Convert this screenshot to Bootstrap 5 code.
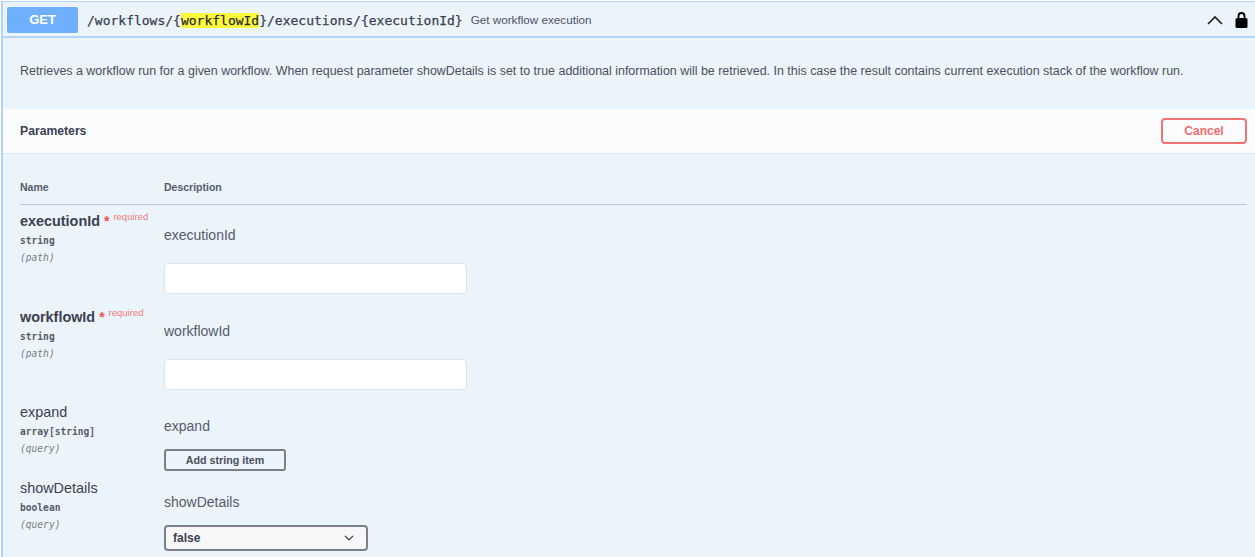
<!DOCTYPE html>
<html lang="en">
<head>
    <meta charset="UTF-8">
    <title>Get workflow execution</title>
    <meta name="viewport" content="width=device-width, initial-scale=1">
    <link href="https://cdn.jsdelivr.net/npm/bootstrap@5.3.3/dist/css/bootstrap.min.css" rel="stylesheet">
    <style>
        html, body { height: 557px; overflow: hidden; background: #fff; }
        body { font-family: "Liberation Sans", Arial, sans-serif; color: #3b4151; }
        .op-block { margin: 1px 0 0 1px; height: 560px; background: #ebf3fb; border: 1px solid #b4d3f8; border-left-width: 2px; border-right-width: 0; }
        .op-head { height: 36px; padding: 5px 7px 3px 4px; border-bottom: 2px solid #b4d3f8; }
        .method-tag { width: 71px; height: 26px; background: #6fb0fe; color: #fff; font-size: 13px; font-weight: 700; border-radius: 2px; }
        .op-path { margin-left: 9px; font: 13px "DejaVu Sans Mono", monospace; color: #3b4151; white-space: nowrap; -webkit-text-stroke: .25px #3b4151; }
        .op-path mark { padding: 0; background: #fdfb3c; color: #222; }
        .op-summary { margin-left: 8px; font-size: 11.7px; color: #4d5464; }
        .op-desc { height: 71px; padding: 24px 17px 0; font-size: 12.45px; color: #4a5160; white-space: nowrap; }
        .param-bar { height: 45px; padding: 0 8px 0 17px; background: #fafcfe; border-bottom: 1px solid #e0e6ee; }
        .param-bar b { font-size: 12.2px; }
        .cancel-btn { width: 86px; height: 26px; padding: 0; border: 2px solid #f47272; border-radius: 4px; background: transparent; color: #f46c6c; font-size: 12px; font-weight: 700; }
        .param-table { padding: 0 8px 0 17px; }
        .table-top { height: 51px; padding-bottom: 11px; border-bottom: 1px solid #bcc6d8; font-size: 10.5px; font-weight: 700; color: #565d6c; }
        .name-col { width: 144px; flex-shrink: 0; }
        .param-row { height: 95.5px; }
        .param-row.short-row { height: 76px; }
        .param-name { font-size: 14.4px; line-height: 16px; }
        .param-name.req { font-weight: 700; }
        .param-name sup { top: -6px; font-size: 9.5px; font-weight: 400; color: #f47a7a; }
        .req-star { font-size: 14px; color: #f0504f; }
        .param-type { margin-top: 6px; font: 700 9.6px/12px "DejaVu Sans Mono", monospace; color: #565d6c; }
        .param-in { margin-top: 5px; font: italic 9.6px/12px "DejaVu Sans Mono", monospace; color: #777e8a; }
        .label-col { padding-top: 14px; }
        .param-label { font-size: 14px; line-height: 16px; color: #565c6b; }
        .text-box { display: block; width: 303px; height: 31px; margin-top: 20px; border: 1px solid #dde3ea; border-radius: 4px; background: #fff; }
        .add-btn { width: 122px; height: 22px; margin-top: 15px; padding: 0; border: 2px solid #7b7f88; border-radius: 3px; background: transparent; color: #4a5160; font-size: 10.7px; font-weight: 700; }
        .bool-select { width: 204px; height: 26px; margin-top: 15px; padding: 0 7px; border: 2px solid #7b7f88; border-radius: 4px; background-color: #f7f7f7; background-position: right 12px center; background-size: 10px; font-size: 12px; font-weight: 700; color: #3b4151; }
    </style>
</head>
<body>
    <div class="op-block">
        <div class="op-head d-flex align-items-start">
            <span class="method-tag d-flex align-items-center justify-content-center">GET</span>
            <span class="op-path align-self-center">/workflows/{<mark>workflowId</mark>}/executions/{executionId}</span>
            <span class="op-summary align-self-center">Get workflow execution</span>
            <span class="ms-auto d-flex align-items-center gap-2 align-self-center">
                <svg width="16" height="10" viewBox="0 0 16 10"><path d="M1 9 L8 2 L15 9" fill="none" stroke="#222" stroke-width="1.7"/></svg>
                <svg class="ms-1" width="13" height="16" viewBox="0 0 13 16"><path d="M3.5 7 V4 a3 3 0 0 1 6 0 V7" fill="none" stroke="#000" stroke-width="1.8"/><rect x="0.5" y="6" width="12" height="10" rx="1.5" fill="#000"/></svg>
            </span>
        </div>

        <div class="op-desc">Retrieves a workflow run for a given workflow. When request parameter showDetails is set to true additional information will be retrieved. In this case the result contains current execution stack of the workflow run.</div>

        <div class="param-bar d-flex align-items-center justify-content-between">
            <b>Parameters</b>
            <button class="cancel-btn">Cancel</button>
        </div>

        <div class="param-table">
            <div class="table-top d-flex align-items-end pb-2">
                <div class="name-col">Name</div>
                <div>Description</div>
            </div>

            <div class="param-row d-flex pt-2">
                <div class="name-col">
                    <div class="param-name req">executionId <span class="req-star">*</span> <sup>required</sup></div>
                    <div class="param-type">string</div>
                    <div class="param-in">(path)</div>
                </div>
                <div class="label-col">
                    <div class="param-label">executionId</div>
                    <input class="text-box" type="text">
                </div>
            </div>

            <div class="param-row d-flex pt-2">
                <div class="name-col">
                    <div class="param-name req">workflowId <span class="req-star">*</span> <sup>required</sup></div>
                    <div class="param-type">string</div>
                    <div class="param-in">(path)</div>
                </div>
                <div class="label-col">
                    <div class="param-label">workflowId</div>
                    <input class="text-box" type="text">
                </div>
            </div>

            <div class="param-row short-row d-flex pt-2">
                <div class="name-col">
                    <div class="param-name">expand</div>
                    <div class="param-type">array[string]</div>
                    <div class="param-in">(query)</div>
                </div>
                <div class="label-col">
                    <div class="param-label">expand</div>
                    <button class="add-btn d-block">Add string item</button>
                </div>
            </div>

            <div class="param-row d-flex pt-2">
                <div class="name-col">
                    <div class="param-name">showDetails</div>
                    <div class="param-type">boolean</div>
                    <div class="param-in">(query)</div>
                </div>
                <div class="label-col">
                    <div class="param-label">showDetails</div>
                    <select class="form-select bool-select"><option>false</option><option>true</option></select>
                </div>
            </div>
        </div>
    </div>
    <script src="https://cdn.jsdelivr.net/npm/bootstrap@5.3.3/dist/js/bootstrap.bundle.min.js"></script>
</body>
</html>
